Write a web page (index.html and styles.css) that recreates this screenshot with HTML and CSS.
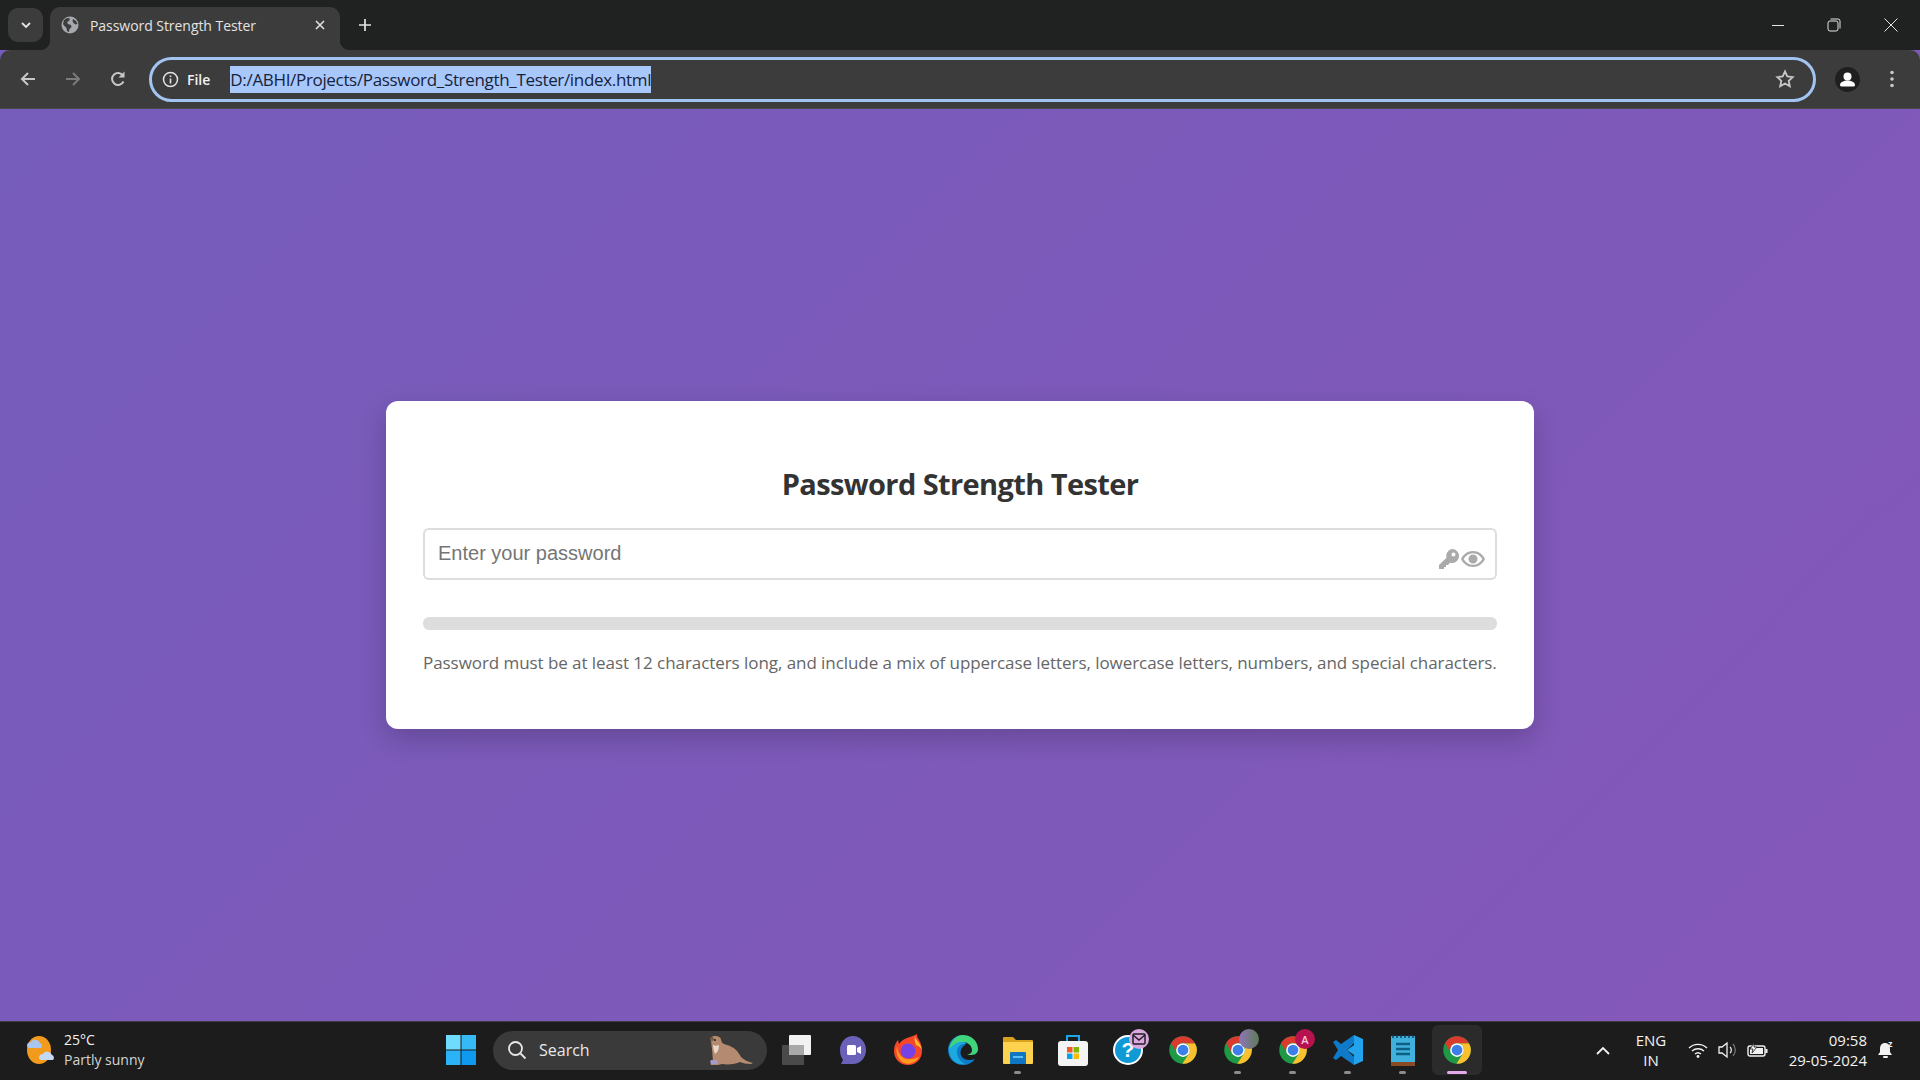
FILE: index.html
```html
<!DOCTYPE html>
<html lang="en">
<head>
    <meta charset="UTF-8">
    <title>Password Strength Tester</title>
    <link rel="stylesheet" href="styles.css">
</head>
<body>
    <svg class="defs" width="0" height="0">
        <symbol id="chrome" viewBox="0 0 48 48">
            <circle cx="24" cy="24" r="22" fill="#1e9a47"/>
            <path fill="#fbc02d" d="M43.05 13H24a11 11 0 0 1 9.5 16.5L23 46A22 22 0 0 0 43.05 13z"/>
            <path fill="#db3a2e" d="M24 13h19.05A22 22 0 0 0 4.95 13l9.5 16.5A11 11 0 0 1 24 13z"/>
            <circle cx="24" cy="24" r="11" fill="#fff"/>
            <circle cx="24" cy="24" r="8.6" fill="#3d7fe8"/>
        </symbol>
    </svg>

    <div class="tabstrip">
        <div class="tab-search">
            <svg width="12" height="12" viewBox="0 0 12 12"><path d="M2 4l4 4 4-4" fill="none" stroke="#e3e3e3" stroke-width="1.8"/></svg>
        </div>
        <div class="tab">
            <svg class="favicon" width="18" height="18" viewBox="0 0 18 18">
                <circle cx="9" cy="9" r="8.5" fill="#a6a9ad"/>
                <path fill="#3c3c3c" d="M3 4l3-2 3 .5L8 5 6 6l1 2 3 1 .5 2-2 2-.5 3-2-1-.5-3-2-2-1.5-2zM12 3l3 2 1.5 3-2 .5-2-1.5-1-2z"/>
            </svg>
            <span class="tab-title">Password Strength Tester</span>
            <svg class="tab-close" width="12" height="12" viewBox="0 0 12 12"><path d="M2 2l8 8M10 2l-8 8" stroke="#e3e3e3" stroke-width="1.6"/></svg>
        </div>
        <svg class="new-tab" width="14" height="14" viewBox="0 0 14 14"><path d="M7 1v12M1 7h12" stroke="#e3e3e3" stroke-width="1.7"/></svg>
        <div class="win-controls">
            <svg width="14" height="14" viewBox="0 0 14 14"><path d="M1 7.5h12" stroke="#e3e3e3" stroke-width="1"/></svg>
            <svg width="14" height="14" viewBox="0 0 14 14"><rect x="1" y="3" width="10" height="10" rx="2" fill="none" stroke="#e3e3e3"/><path d="M3.5 1H11a2 2 0 0 1 2 2v7.5" fill="none" stroke="#e3e3e3"/></svg>
            <svg class="win-close" width="14" height="14" viewBox="0 0 14 14"><path d="M.5.5l13 13M13.5.5l-13 13" stroke="#e3e3e3" stroke-width="1"/></svg>
        </div>
    </div>

    <div class="toolbar">
        <div class="nav-btns">
            <svg width="18" height="18" viewBox="0 0 18 18"><path d="M16 9H3M9 3L3 9l6 6" fill="none" stroke="#c7c7c7" stroke-width="2"/></svg>
            <svg width="18" height="18" viewBox="0 0 18 18"><path d="M2 9h13M9 3l6 6-6 6" fill="none" stroke="#7b7b7b" stroke-width="2"/></svg>
            <svg width="18" height="18" viewBox="0 0 18 18"><path d="M14.5 11.5A6 6 0 1 1 14 5.5" fill="none" stroke="#c7c7c7" stroke-width="2"/><path d="M15.5 1.5v6h-6z" fill="#c7c7c7"/></svg>
        </div>
        <div class="omnibox">
            <svg class="info-icon" width="17" height="17" viewBox="0 0 17 17"><circle cx="8.5" cy="8.5" r="7" fill="none" stroke="#e3e3e3" stroke-width="1.5"/><path d="M8.5 7.5v5M8.5 4.5v1.6" stroke="#e3e3e3" stroke-width="1.6"/></svg>
            <span class="scheme">File</span>
            <span class="url">D:/ABHI/Projects/Password_Strength_Tester/index.html</span>
            <svg class="star" width="20" height="20" viewBox="0 0 20 20"><path d="M10 2.5l2.3 5 5.4.6-4 3.7 1.1 5.4L10 14.5l-4.8 2.7 1.1-5.4-4-3.7 5.4-.6z" fill="none" stroke="#c7c7c7" stroke-width="1.8"/></svg>
        </div>
        <div class="avatar">
            <svg width="25" height="25" viewBox="0 0 25 25"><circle cx="12.5" cy="12.5" r="12.5" fill="#1f1f1f"/><circle cx="12.5" cy="9.5" r="4" fill="#fff"/><path d="M5 18c0-3 4-4.5 7.5-4.5S20 15 20 18c0 1-1 1.5-2 1.5H7c-1 0-2-.5-2-1.5z" fill="#fff"/></svg>
        </div>
        <svg class="menu-dots" width="6" height="18" viewBox="0 0 6 18"><circle cx="3" cy="2.5" r="1.8" fill="#c7c7c7"/><circle cx="3" cy="9" r="1.8" fill="#c7c7c7"/><circle cx="3" cy="15.5" r="1.8" fill="#c7c7c7"/></svg>
    </div>

    <main class="page">
        <div class="card">
            <h1 class="card-title">Password Strength Tester</h1>
            <div class="input-wrap">
                <input class="password-input" type="password" placeholder="Enter your password">
                <div class="input-icons">
                    <svg width="22" height="22" viewBox="0 0 22 22"><path fill="#aaa" fill-rule="evenodd" d="M14 1a7 7 0 1 1-2 13.7L10 17H8v2H6v2H1v-4l7.5-7.3A7 7 0 0 1 14 1zm1.5 3.5a2 2 0 1 0 0 4 2 2 0 0 0 0-4z"/></svg>
                    <svg width="24" height="16" viewBox="0 0 24 16"><path fill="#aaa" fill-rule="evenodd" d="M12 0c5.500 0 9.800 3.500 12 8-2.200 4.500-6.500 8-12 8S2.200 12.500 0 8c2.200-4.500 6.500-8 12-8zm0 2.200C8 2.200 4.700 4.500 2.600 8c2.100 3.500 5.400 5.800 9.400 5.800s7.300-2.300 9.400-5.800C19.300 4.500 16 2.200 12 2.200zM12 3.500a4.500 4.500 0 1 1 0 9 4.500 4.500 0 0 1 0-9z"/></svg>
                </div>
            </div>
            <div class="strength-bar"></div>
            <p class="hint">Password must be at least 12 characters long, and include a mix of uppercase letters, lowercase letters, numbers, and special characters.</p>
        </div>
    </main>

    <footer class="taskbar">
        <div class="weather">
            <svg width="32" height="30" viewBox="0 0 32 30">
                <ellipse cx="14" cy="15" rx="12" ry="14" fill="#f29a1c"/>
                <path fill="#a9c6ee" d="M2 11a4 4 0 0 1 4-4 5 5 0 0 1 9 1 3 3 0 0 1 1 5H4a3 3 0 0 1-2-2z"/>
                <path fill="#c3d8f4" d="M14 23a4 4 0 0 1 4-4 5 5 0 0 1 9 1 3 3 0 0 1 1 5H16a3 3 0 0 1-2-2z"/>
            </svg>
            <div class="weather-text">
                <span class="temp">25°C</span>
                <span class="sky">Partly sunny</span>
            </div>
        </div>

        <svg class="start" width="30" height="30" viewBox="0 0 30 30">
            <rect width="14.5" height="14.5" fill="#6fdcff"/>
            <rect x="15.5" width="14.5" height="14.5" fill="#35baf6"/>
            <rect y="15.5" width="14.5" height="14.5" fill="#2cb2f7"/>
            <rect x="15.5" y="15.5" width="14.5" height="14.5" fill="#0f9af0"/>
        </svg>

        <div class="search">
            <svg width="20" height="20" viewBox="0 0 20 20"><circle cx="8.5" cy="8.5" r="6.5" fill="none" stroke="#e8e8e8" stroke-width="1.8"/><path d="M13.5 13.5l5 5" stroke="#e8e8e8" stroke-width="1.8"/></svg>
            <span class="search-label">Search</span>
            <svg class="otter" width="50" height="30" viewBox="0 0 50 30">
                <path fill="#b48b70" d="M6 6c-1-3 1-5 4-5s6 1 6 4c1 3 2 4 6 5 7 2 11 6 14 12 3 3 7 5 12 6l-2 1c-5 0-8-1-11-2-4 2-12 3-18 2l-4 1H6c-1-1 0-2 2-2 0-5-1-14-2-22z"/>
                <path fill="#e8d8cc" d="M8 10c2 1 4 1 6 0 0 4-1 7-4 9-1-3-2-6-2-9z"/>
                <path fill="#a59ac8" d="M6 25h6l1 3-1 1H6c-1-1-1-3 0-4z"/>
                <circle cx="7" cy="4" r="2" fill="#7a5a44"/>
                <circle cx="10" cy="5" r="1" fill="#222"/>
            </svg>
        </div>

        <div class="apps">
            <div class="app">
                <svg width="32" height="30" viewBox="0 0 32 30"><rect x="0" y="10" width="22" height="20" rx="1" fill="#4a4a4a"/><rect x="7" y="0" width="22" height="20" rx="1" fill="#f2f2f2"/><rect x="7" y="10" width="15" height="10" fill="#a9a9a9"/></svg>
            </div>
            <div class="app">
                <svg width="30" height="30" viewBox="0 0 30 30"><path fill="#6a62b8" d="M15 1c7 0 13 6 13 14s-6 14-13 14H3l2-4c-2-3-3-6-3-10C2 7 8 1 15 1z"/><rect x="9" y="10" width="9" height="10" rx="1.5" fill="#fff"/><path d="M19 13l4-2v8l-4-2z" fill="#fff"/></svg>
            </div>
            <div class="app">
                <svg width="30" height="32" viewBox="0 0 30 32"><path fill="#f6472c" d="M15 31C7 31 1 25 1 17c0-4 1-8 4-11l1 4c2-3 5-5 8-6 4-1 8-3 10-4 0 3 1 4 2 6 2 3 3 7 3 11 0 8-6 14-14 14z"/><path fill="#ffbd29" d="M22 2c0 4 6 7 7 14 0-1-3-4-6-5-1-3-2-6-1-9z"/><circle cx="15" cy="17" r="7.5" fill="#7542e5"/><path fill="#ff9a1f" d="M4 12c1 10 8 17 22 11-3 6-10 8-15 6-5-2-9-10-7-17z"/></svg>
            </div>
            <div class="app">
                <svg width="32" height="32" viewBox="0 0 32 32"><path fill="#0f7ac7" d="M16 1C7 1 1 8 1 16c0 8 6 15 15 15 5 0 9-2 12-6-5 2-11 1-13-2-3-4-1-10 3-12 1-4-1-7-2-10z"/><path fill="#40d57c" d="M16 1c8 0 15 6 15 14 0 5-4 6-8 6h-3c4-1 5-3 5-5 0-5-5-8-9-8-5 0-10 3-14 8C3 8 8 1 16 1z"/><path fill="#1ea8e0" d="M2 16c3-5 8-8 13-8 2 0 4 1 5 2-5-1-10 2-10 8 0 5 4 11 9 12-9 2-17-5-17-14z"/></svg>
            </div>
            <div class="app running">
                <svg width="30" height="30" viewBox="0 0 30 30"><path fill="#d9a21c" d="M0 3a1 1 0 0 1 1-1h9l3 3h16a1 1 0 0 1 1 1v4H0z"/><path fill="#fdd24f" d="M0 7h30v21a1 1 0 0 1-1 1H1a1 1 0 0 1-1-1z"/><path fill="#0f76c4" d="M7 18a1 1 0 0 1 1-1h14a1 1 0 0 1 1 1v11H7z"/><rect x="10" y="21" width="10" height="2" fill="#5ac0f2"/></svg>
            </div>
            <div class="app">
                <svg width="30" height="32" viewBox="0 0 30 32"><path d="M9 8V2h12v6" fill="none" stroke="#1ba6e8" stroke-width="2"/><rect x="0" y="7" width="30" height="25" rx="3" fill="#f4f4f4"/><rect x="9" y="13" width="5.5" height="5.5" fill="#ef5a28"/><rect x="15.5" y="13" width="5.5" height="5.5" fill="#7fba00"/><rect x="9" y="19.5" width="5.5" height="5.5" fill="#05a6f0"/><rect x="15.5" y="19.5" width="5.5" height="5.5" fill="#ffba08"/></svg>
            </div>
            <div class="app">
                <svg width="30" height="30" viewBox="0 0 30 30"><circle cx="15" cy="15" r="14" fill="#0f9ad6" stroke="#fff" stroke-width="2"/><text class="help-mark" x="15" y="22" text-anchor="middle">?</text></svg>
                <span class="badge badge-mail">
                    <svg width="14" height="12" viewBox="0 0 14 12"><rect x="1" y="1" width="12" height="10" rx="1" fill="none" stroke="#1f1f1f" stroke-width="1.5"/><path d="M1 2l6 5 6-5" fill="none" stroke="#1f1f1f" stroke-width="1.5"/></svg>
                </span>
            </div>
            <div class="app"><svg width="30" height="30"><use href="#chrome"/></svg></div>
            <div class="app running">
                <svg width="30" height="30"><use href="#chrome"/></svg>
                <span class="badge badge-photo"></span>
            </div>
            <div class="app running">
                <svg width="30" height="30"><use href="#chrome"/></svg>
                <span class="badge badge-letter">A</span>
            </div>
            <div class="app running">
                <svg width="30" height="30" viewBox="0 0 30 30"><path fill="#0f7ac7" d="M8 21L3 25 0 23l5-8-5-8 3-2 5 4L21 0v8l-7 7 7 7v8z"/><path fill="#22a3ec" d="M21 0l9 4v22l-9 4V20l-7-5 7-5z"/></svg>
            </div>
            <div class="app running">
                <svg width="24" height="31" viewBox="0 0 24 31"><rect y="1" width="24" height="30" fill="#3fb1dc"/><rect y="27" width="24" height="4" fill="#8a4b25"/><path d="M2 0v3M6 0v3M10 0v3M14 0v3M18 0v3M22 0v3" stroke="#123f5c" stroke-width="1.5"/><path d="M5 9h14M5 14h14M5 19h14" stroke="#0d5f86" stroke-width="2.4"/></svg>
            </div>
            <div class="app active">
                <svg width="30" height="30"><use href="#chrome"/></svg>
            </div>
        </div>

        <div class="tray">
            <svg class="tray-chevron" width="14" height="9" viewBox="0 0 14 9"><path d="M1 8l6-6 6 6" fill="none" stroke="#f2f2f2" stroke-width="1.8"/></svg>
            <div class="lang"><span>ENG</span><span>IN</span></div>
            <svg class="tray-wifi" width="20" height="16" viewBox="0 0 20 16"><path d="M1 6a13 13 0 0 1 18 0M4 9a9 9 0 0 1 12 0M7 12a4.5 4.5 0 0 1 6 0" fill="none" stroke="#f2f2f2" stroke-width="1.4"/><circle cx="10" cy="14.5" r="1.4" fill="#f2f2f2"/></svg>
            <svg class="tray-volume" width="20" height="18" viewBox="0 0 20 18"><path d="M1 6h3l5-4v14l-5-4H1z" fill="none" stroke="#f2f2f2" stroke-width="1.3"/><path d="M12 6a4 4 0 0 1 0 6" fill="none" stroke="#f2f2f2" stroke-width="1.2"/><path d="M15 3a9 9 0 0 1 0 12" fill="none" stroke="#777" stroke-width="1.2"/></svg>
            <svg class="tray-battery" width="21" height="14" viewBox="0 0 21 14"><rect x="1" y="3" width="17" height="10" rx="2" fill="none" stroke="#f2f2f2" stroke-width="1.4"/><rect x="18.5" y="6" width="2" height="4" fill="#f2f2f2"/><rect x="3" y="5" width="13" height="6" fill="#f2f2f2"/><path d="M7 0L3 6h3l-1 4 5-6H7z" fill="#f2f2f2" stroke="#1c1c1c" stroke-width=".8"/></svg>
            <div class="clock"><span>09:58</span><span>29-05-2024</span></div>
            <svg class="tray-bell" width="18" height="20" viewBox="0 0 18 20"><path d="M8 3c3 0 5 2 5 6v3l2 3H1l2-3V9c0-4 2-6 5-6z" fill="#f2f2f2"/><rect x="6" y="16" width="5" height="2" rx="1" fill="#f2f2f2"/><text class="bell-z" x="11" y="7">z</text></svg>
        </div>
    </footer>
</body>
</html>
```

FILE: styles.css
```css
* {
    box-sizing: border-box;
}

html, body {
    margin: 0;
    height: 100%;
    overflow: hidden;
}

body {
    display: flex;
    flex-direction: column;
    height: 1080px;
    background: linear-gradient(135deg, #755cbb, #8558ba);
    font-family: "Open Sans", "Noto Sans", sans-serif;
}

.defs {
    position: absolute;
}

/* browser chrome */
.tabstrip {
    display: flex;
    align-items: center;
    flex: 0 0 50px;
    height: 50px;
    background: #202221;
    padding-left: 8px;
}

.tab-search {
    display: flex;
    align-items: center;
    justify-content: center;
    width: 35px;
    height: 34px;
    background: #3c3c3c;
    border-radius: 10px;
    margin-right: 7px;
}

.tab {
    position: relative;
    display: flex;
    align-items: center;
    align-self: flex-end;
    width: 290px;
    height: 43px;
    padding: 0 14px 7px 11px;
    background: #3c3c3c;
    border-radius: 10px 10px 0 0;
}

.tab::before,
.tab::after {
    content: "";
    position: absolute;
    bottom: 0;
    width: 10px;
    height: 10px;
}

.tab::before {
    left: -10px;
    background: radial-gradient(circle at 0 0, #202221 10px, #3c3c3c 10.5px);
}

.tab::after {
    right: -10px;
    background: radial-gradient(circle at 100% 0, #202221 10px, #3c3c3c 10.5px);
}

.tab-title {
    flex: 1;
    margin-left: 11px;
    font-size: 14px;
    letter-spacing: -0.05px;
    color: #e3e3e3;
    white-space: nowrap;
}

.new-tab {
    margin-left: 18px;
}

.win-controls {
    display: flex;
    align-items: center;
    gap: 42px;
    margin-left: auto;
    margin-right: 22px;
}

.win-close {
    margin-left: 1px;
}

.toolbar {
    display: flex;
    align-items: center;
    flex: 0 0 59px;
    height: 59px;
    background: #3c3c3c;
    border-radius: 10px 10px 0 0;
    padding-left: 19px;
    border-bottom: 1px solid #4a4a4a;
}

.nav-btns {
    display: flex;
    align-items: center;
    gap: 27px;
    margin-right: 22px;
}

.omnibox {
    display: flex;
    align-items: center;
    width: 1667px;
    height: 45px;
    padding: 0 18px 0 10px;
    border: 3px solid #a3c3f1;
    border-radius: 23px;
    background: #3c3c3c;
}

.scheme {
    margin-left: 8px;
    font-size: 14px;
    font-weight: 600;
    color: #f1f1f1;
}

.url {
    margin-left: 20px;
    padding: 3px 0;
    height: 27px;
    line-height: 21px;
    font-size: 17px;
    letter-spacing: -0.33px;
    color: #16233a;
    background: #a8c7fa;
    white-space: nowrap;
}

.star {
    margin-left: auto;
}

.avatar {
    display: flex;
    margin-left: 19px;
}

.menu-dots {
    margin-left: 29px;
}

/* page content */
.page {
    flex: 1;
    display: flex;
    align-items: center;
    justify-content: center;
}

.card {
    width: 1148px;
    padding: 37px;
    background: #fff;
    border-radius: 12px;
    box-shadow: 0 10px 28px rgba(0, 0, 0, 0.2);
}

.card-title {
    margin: 26px 0 24px;
    text-align: center;
    font-size: 29px;
    letter-spacing: -0.6px;
    line-height: 40px;
    font-weight: 700;
    color: #333;
}

.input-wrap {
    position: relative;
}

.password-input {
    display: block;
    width: 100%;
    height: 52px;
    padding: 0 13px 1px;
    border: 2px solid #ddd;
    border-radius: 6px;
    font-family: "Liberation Sans", Arial, sans-serif;
    font-size: 20px;
    outline: none;
}

.password-input::placeholder {
    color: #757575;
}

.input-icons {
    position: absolute;
    right: 12px;
    top: 20px;
    display: flex;
    align-items: center;
    gap: 1px;
}

.strength-bar {
    height: 13px;
    margin-top: 37px;
    background: #ddd;
    border-radius: 6px;
}

.hint {
    margin: 21px 0 17px;
    font-size: 17px;
    letter-spacing: -0.06px;
    line-height: 24px;
    color: #666;
    white-space: nowrap;
}

/* windows taskbar */
.taskbar {
    display: flex;
    align-items: center;
    flex: 0 0 59px;
    height: 59px;
    padding: 0 0 2px 25px;
    background: #1c1c1c;
    border-top: 1px solid #3d3a42;
    color: #f2f2f2;
}

.weather {
    display: flex;
    align-items: center;
    width: 421px;
    gap: 7px;
}

.weather-text {
    display: flex;
    flex-direction: column;
    line-height: 20px;
    font-size: 14px;
}

.sky {
    color: #d4d4d4;
}

.start {
    margin-right: 17px;
}

.search {
    display: flex;
    align-items: center;
    width: 274px;
    height: 39px;
    padding: 0 12px 0 14px;
    background: #3a3a3a;
    border-radius: 20px;
}

.search-label {
    margin-left: 12px;
    font-size: 16px;
    color: #e8e8e8;
}

.otter {
    margin-left: auto;
}

.apps {
    display: flex;
    align-items: center;
    margin-left: 3px;
}

.app {
    position: relative;
    display: flex;
    align-items: center;
    justify-content: center;
    width: 55px;
    height: 50px;
}

.app.running::after,
.app.active::after {
    content: "";
    position: absolute;
    bottom: 1px;
    left: 24px;
    width: 7px;
    height: 3px;
    border-radius: 2px;
    background: #8c8c8c;
}

.app.active {
    background: #2b2b2b;
    border-radius: 6px;
    width: 50px;
    margin-left: 2px;
}

.app.active::after {
    left: 15px;
    width: 20px;
    background: #e3a9e8;
}

.help-mark {
    font-family: "Liberation Sans", sans-serif;
    font-size: 21px;
    font-weight: 700;
    fill: #fff;
}

.badge {
    position: absolute;
    display: flex;
    align-items: center;
    justify-content: center;
    top: 4px;
    left: 29px;
    width: 20px;
    height: 20px;
    border-radius: 50%;
}

.badge-mail {
    background: #dca6de;
}

.badge-photo {
    background: linear-gradient(90deg, #8f76b8, #5f7a58);
}

.badge-letter {
    left: 30px;
    background: #b5124f;
    color: #f7c4d6;
    font-size: 11px;
    font-weight: 600;
}

.tray {
    display: flex;
    align-items: center;
    margin-left: auto;
    padding-right: 25px;
    font-size: 15px;
}

.tray-chevron {
    margin-right: 24px;
}

.lang {
    display: flex;
    flex-direction: column;
    align-items: center;
    width: 34px;
    line-height: 20px;
    margin-right: 20px;
}

.tray-wifi {
    margin-right: 9.5px;
}

.tray-volume {
    margin-right: 9.5px;
}

.clock {
    display: flex;
    flex-direction: column;
    align-items: flex-end;
    width: 90px;
    margin-left: 9px;
    line-height: 20px;
}

.tray-bell {
    margin-left: 10px;
}

.bell-z {
    font-family: "Liberation Sans", sans-serif;
    font-size: 9px;
    font-weight: 700;
    fill: #f2f2f2;
}
```
